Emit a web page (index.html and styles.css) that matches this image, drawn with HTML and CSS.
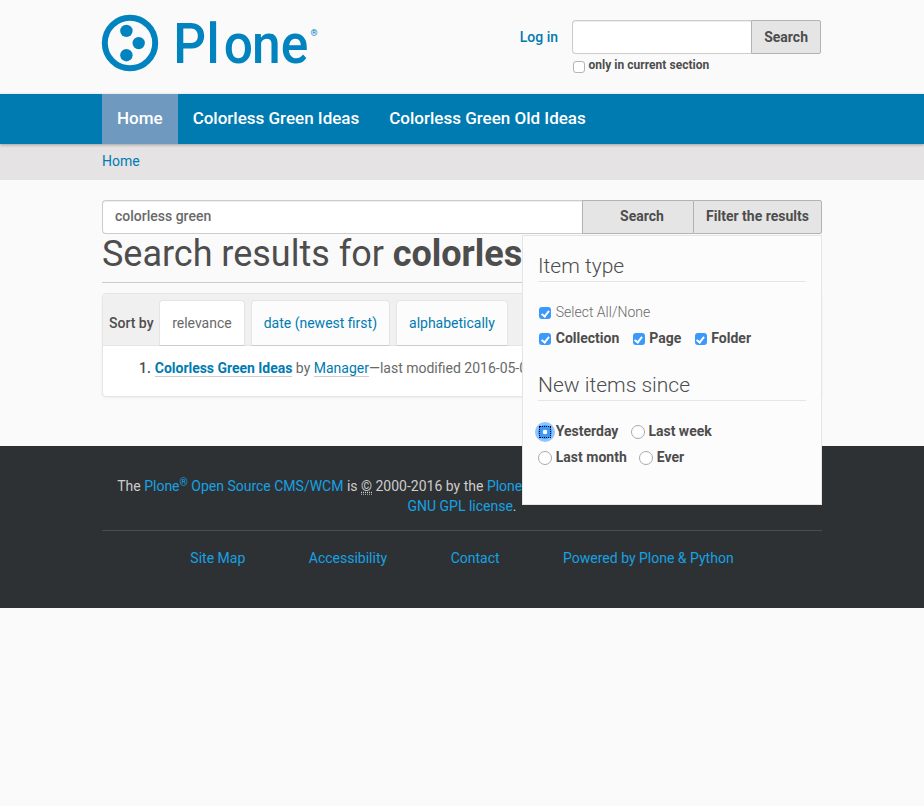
FILE: index.html
```html
<!DOCTYPE html>
<html lang="en">
<head>
<meta charset="utf-8">
<title>Search results</title>
<link rel="stylesheet" href="styles.css">
</head>
<body>
<header class="site-header container">
  <a class="logo" aria-label="Plone">
    <svg width="220" height="64" viewBox="0 0 220 64">
      <circle cx="28" cy="32" r="25.2" fill="none" stroke="#0083be" stroke-width="6"/>
      <g fill="#0083be">
        <circle cx="24.4" cy="19.9" r="6.2"/>
        <circle cx="36.7" cy="32.1" r="6.2"/>
        <circle cx="24.4" cy="44.2" r="6.2"/>
        <text class="logo-word" transform="scale(.92 1)" x="77.4 113.6 132.3 163 194.2" y="51.8">Plone</text>
        <text class="logo-mark" x="208.6" y="24.8">®</text>
      </g>
    </svg>
  </a>
  <div class="header-tools">
    <a class="login">Log in</a>
    <form class="quick-search">
      <div class="search-row">
        <input class="field" type="text" aria-label="Search Site">
        <button class="button" type="button">Search</button>
      </div>
      <label class="section-only"><input class="check" type="checkbox">only in current section</label>
    </form>
  </div>
</header>
<nav class="main-nav">
  <div class="container nav-items">
    <a class="nav-item active">Home</a>
    <a class="nav-item">Colorless Green Ideas</a>
    <a class="nav-item">Colorless Green Old Ideas</a>
  </div>
</nav>
<div class="breadcrumbs"><div class="container"><a>Home</a></div></div>
<main class="container content">
  <div class="search-bar">
    <input class="field" type="text" value="colorless green" aria-label="Search">
    <button class="button wide" type="button">Search</button>
    <button class="button filter" type="button">Filter the results</button>
    <section class="filter-panel">
      <h2>Item type</h2>
      <div class="options">
        <label class="all"><input class="check" type="checkbox" checked>Select All/None</label>
      </div>
      <div class="options">
        <label><input class="check" type="checkbox" checked>Collection</label>
        <label><input class="check" type="checkbox" checked>Page</label>
        <label><input class="check" type="checkbox" checked>Folder</label>
      </div>
      <h2 class="since">New items since</h2>
      <div class="options">
        <label><input class="radio" type="radio" name="since" checked>Yesterday</label>
        <label><input class="radio" type="radio" name="since">Last week</label>
      </div>
      <div class="options">
        <label><input class="radio" type="radio" name="since">Last month</label>
        <label><input class="radio" type="radio" name="since">Ever</label>
      </div>
    </section>
  </div>
  <h1>Search results for <strong>colorless green</strong></h1>
  <section class="results">
    <div class="sort">
      <span class="sort-label">Sort by</span>
      <a class="tab active">relevance</a>
      <a class="tab">date (newest first)</a>
      <a class="tab">alphabetically</a>
    </div>
    <div class="result"><span class="num">1.</span><a class="title">Colorless Green Ideas</a> by <a>Manager</a>—last modified 2016-05-04</div>
  </section>
</main>
<footer class="site-footer">
  <div class="container">
    <p class="legal">The <a>Plone<sup>®</sup> Open Source CMS/WCM</a> is <abbr title="Copyright">©</abbr> 2000-2016 by the <a>Plone Foundation</a> and friends. Distributed under the <a>GNU GPL license</a>.</p>
    <nav class="footer-links"><a>Site Map</a><a>Accessibility</a><a>Contact</a><a>Powered by Plone &amp; Python</a></nav>
  </div>
</footer>
</body>
</html>
```

FILE: styles.css
```css
*, ::before, ::after { box-sizing: border-box; }
body { margin: 0; background: #fafafa; color: #696969; font: 400 14px/20px Roboto, sans-serif; }
a { color: #007bb1; }
.container { width: 720px; margin: 0 auto; }
.site-header { height: 94px; display: flex; justify-content: space-between; }
.logo { margin-top: 11px; }
.logo svg { display: block; overflow: visible; }
.logo-word { font: 500 56px Roboto, sans-serif; }
.logo-mark { font: 700 9px Roboto, sans-serif; }
.header-tools { display: flex; margin: 20px 1px 0 0; gap: 14px; }
.login { font-weight: 500; line-height: 34px; }
.quick-search { width: 249px; }
.search-row, .search-bar { display: flex; }
.field { flex: 1; min-width: 0; height: 34px; padding: 0 12px 2px; border: 1px solid #ccc; border-right: 0; border-radius: 4px 0 0 4px; background: #fff; box-shadow: inset 0 1px 1px rgba(0,0,0,.075); color: #696969; font: 500 14px Roboto, sans-serif; outline: 0; }
.button { height: 34px; padding: 0 12px; border: 1px solid #b3b3b3; border-radius: 0 2px 2px 0; background: #e5e5e5; color: #4d4d4d; font: 700 14px Roboto, sans-serif; white-space: nowrap; }
.section-only { display: flex; align-items: center; height: 22px; color: #4d4d4d; font-size: 12px; font-weight: 700; letter-spacing: .03px; }
.check { position: relative; appearance: none; flex: none; width: 12px; height: 12px; margin: 0 4px 0 1px; border: 1px solid #b5b5b5; border-radius: 3px; background: #fff; }
.section-only .check { top: 2px; margin-right: 3.5px; }
.check:checked { border: 0; background: #3b99fc; }
.check:checked::after { content: ""; position: absolute; left: 3.8px; top: 1.6px; width: 4.6px; height: 7.8px; border: solid #fff; border-width: 0 2px 2px 0; transform: rotate(38deg); }
.main-nav { position: relative; background: #007bb1; box-shadow: 0 1px 3px rgba(0,0,0,.3); }
.nav-items { display: flex; height: 50px; }
.nav-item { padding: 0 15px; color: #fff; font-size: 17px; font-weight: 500; line-height: 49px; }
.nav-item.active { background: #7099bf; }
.breadcrumbs { height: 36px; background: #e5e3e4; line-height: 34px; }
.content { padding-top: 20px; height: 266px; }
.search-bar { position: relative; }
.button.wide { width: 111px; padding: 0 12px 2px 20px; border-radius: 0; border-right: 0; }
.button.filter { width: 129px; padding-bottom: 2px; }
.filter-panel { position: absolute; z-index: 2; top: 35px; right: 0; width: 300px; height: 270px; padding: 18px 15px; border: 1px solid #e5e5e5; background: #fcfcfc; }
.filter-panel h2 { height: 28px; margin: 0 0 17px; border-bottom: 1px solid #e5e5e5; color: #4d4d4d; font-size: 21px; font-weight: 300; line-height: 25px; }
.filter-panel .since { margin-top: 22px; }
.options { position: relative; z-index: 0; display: flex; height: 26px; gap: 12.2px; color: #4d4d4d; font-weight: 700; }
.options label { display: flex; align-items: center; }
.options .check { margin-top: 2px; margin-right: 4.8px; }
.options .all { color: #696969; font-weight: 300; }
.radio { appearance: none; flex: none; width: 14px; height: 14px; margin: 2px 3.8px 0 0; border: 1px solid #aaa; border-radius: 50%; background: #fff; }
.radio:checked { position: relative; width: 12px; height: 12px; margin-left: 1px; margin-right: 4.8px; border: 1px dotted #000; border-radius: 0; background: radial-gradient(circle, #fff 2px, #3b99fc 2.6px); }
.radio:checked::before { content: ""; position: absolute; z-index: -1; inset: -5px; border: 3px solid #90c5fc; border-radius: 50%; background: #3b99fc; }
h1 { height: 49px; margin: 0 0 10px; padding-top: 1px; border-bottom: 1px solid #ccc; color: #4d4d4d; font-size: 36px; font-weight: 400; line-height: 39px; letter-spacing: -.02px; white-space: nowrap; }
.results { border: 1px solid #e5e5e5; border-radius: 4px; background: #fff; box-shadow: 0 1px 3px rgba(0,0,0,.05); }
.sort { display: flex; align-items: flex-end; height: 52px; padding-left: 6px; gap: 6px; border-bottom: 1px solid #e5e5e5; border-radius: 3px 3px 0 0; background: #f0f0f0; }
.sort-label { margin-right: -.4px; color: #4d4d4d; font-weight: 500; line-height: 43px; }
.tab { height: 46px; margin-bottom: -1px; padding: 0 12px; border: 1px solid #e5e5e5; border-bottom-color: #ccc; border-radius: 4px 4px 0 0; background: #fcfcfc; line-height: 44px; }
.tab.active { background: #fff; color: #696969; }
.result { height: 50px; padding: 12px 0 0 36px; white-space: nowrap; overflow: hidden; }
.result a { display: inline-block; height: 19px; border-bottom: 1px solid #ccc; }
.result .title { font-weight: 700; letter-spacing: -.03px; }
.num { margin-right: 4px; color: #4d4d4d; font-weight: 500; }
.site-footer { height: 162px; padding-top: 30px; background: #2e3133; color: #ccc; }
.site-footer a { color: #16a1e3; }
.legal { height: 55px; margin: 0; padding: 0 15px; border-bottom: 1px solid #4d4d4d; text-align: center; }
.legal sup { position: relative; top: -.5em; font-size: 75%; line-height: 0; vertical-align: baseline; }
.legal abbr { border-bottom: 1px dotted #999; }
.footer-links { display: flex; justify-content: center; gap: 63.5px; padding-top: 17px; }
```
